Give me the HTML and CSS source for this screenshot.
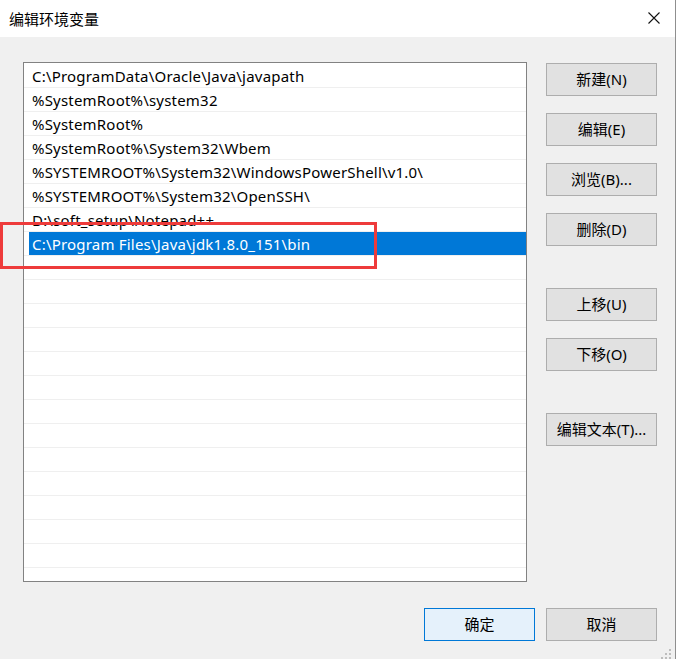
FILE: index.html
```html
<!DOCTYPE html>
<html lang="zh-CN">
<head>
<meta charset="utf-8">
<title>编辑环境变量</title>
<link rel="stylesheet" href="styles.css">
</head>
<body>
<div class="window">
  <div class="titlebar">
    <span class="title">编辑环境变量</span>
    <span class="close" aria-label="关闭">
      <svg width="12" height="12" viewBox="0 0 12 12"><path d="M0.5 0.5 L11.5 11.5 M11.5 0.5 L0.5 11.5" stroke="#111" stroke-width="1.1" fill="none"/></svg>
    </span>
  </div>
  <div class="body">
    <div class="content">
      <div class="listbox">
        <div class="row"><span class="item">C:\ProgramData\Oracle\Java\javapath</span></div>
        <div class="row"><span class="item">%SystemRoot%\system32</span></div>
        <div class="row"><span class="item">%SystemRoot%</span></div>
        <div class="row"><span class="item">%SystemRoot%\System32\Wbem</span></div>
        <div class="row"><span class="item">%SYSTEMROOT%\System32\WindowsPowerShell\v1.0\</span></div>
        <div class="row"><span class="item">%SYSTEMROOT%\System32\OpenSSH\</span></div>
        <div class="row"><span class="item">D:\soft_setup\Notepad++</span></div>
        <div class="row"><span class="item selected">C:\Program Files\Java\jdk1.8.0_151\bin</span></div>
        <div class="row"></div>
        <div class="row"></div>
        <div class="row"></div>
        <div class="row"></div>
        <div class="row"></div>
        <div class="row"></div>
        <div class="row"></div>
        <div class="row"></div>
        <div class="row"></div>
        <div class="row"></div>
        <div class="row"></div>
        <div class="row"></div>
        <div class="row"></div>
        <div class="row"></div>
      </div>
      <div class="side">
        <div class="btn">新建(N)</div>
        <div class="btn gap-s">编辑(E)</div>
        <div class="btn gap-s">浏览(B)...</div>
        <div class="btn gap-s">删除(D)</div>
        <div class="btn gap-l">上移(U)</div>
        <div class="btn gap-s">下移(O)</div>
        <div class="btn gap-l">编辑文本(T)...</div>
      </div>
    </div>
    <div class="footer">
      <div class="btn primary">确定</div>
      <div class="btn">取消</div>
    </div>
    <svg class="grip" width="14" height="12" viewBox="0 0 14 12">
      <rect x="9" y="2" width="2" height="2" fill="#bdbdbd"/>
      <rect x="5" y="6" width="2" height="2" fill="#bdbdbd"/>
      <rect x="9" y="6" width="2" height="2" fill="#bdbdbd"/>
      <rect x="1" y="10" width="2" height="2" fill="#bdbdbd"/>
      <rect x="5" y="10" width="2" height="2" fill="#bdbdbd"/>
      <rect x="9" y="10" width="2" height="2" fill="#bdbdbd"/>
    </svg>
  </div>
  <div class="mark"></div>
</div>
</body>
</html>
```
FILE: styles.css
```css
* { box-sizing: border-box; }
html, body { margin: 0; padding: 0; }
body {
  width: 676px;
  height: 659px;
  overflow: hidden;
  font-family: "Noto Sans", "Noto Sans CJK SC", sans-serif;
  font-size: 15px;
  color: #000;
  background: #f0f0f0;
}
.window {
  position: relative;
  width: 676px;
  height: 659px;
  border-right: 1px solid #8f8f8f;
  display: flex;
  flex-direction: column;
}
.titlebar {
  height: 37px;
  background: #fff;
  display: flex;
  align-items: center;
  justify-content: space-between;
  padding: 0 15px 0 9px;
  flex: none;
}
.title {
  font-family: "Noto Sans CJK SC", sans-serif;
  font-size: 15px;
  line-height: 20px;
}
.close { display: flex; width: 12px; height: 12px; margin-top: -1px; }
.body {
  position: relative;
  flex: 1;
  background: #f0f0f0;
  padding-top: 25px;
  display: flex;
  flex-direction: column;
}
.content {
  display: flex;
  padding-left: 23px;
  gap: 19px;
}
.listbox {
  width: 504px;
  height: 520px;
  border: 1px solid #828282;
  background: #fff;
  padding-top: 1px;
  overflow: hidden;
}
.row {
  height: 24px;
  border-bottom: 1px solid #efefef;
  display: flex;
}
.item {
  flex: 1;
  margin-left: 5px;
  padding-left: 3px;
  padding-top: 1px;
  line-height: 22px;
  letter-spacing: 0.2px;
  white-space: nowrap;
}
.item.selected {
  background: #0078d7;
  color: #fff;
}
.side {
  display: flex;
  flex-direction: column;
  padding-top: 1px;
}
.btn {
  width: 111px;
  height: 33px;
  background: #e1e1e1;
  border: 1px solid #adadad;
  display: flex;
  align-items: center;
  justify-content: center;
  font-size: 15px;
  line-height: 20px;
  padding-bottom: 1px;
}
.gap-s { margin-top: 17px; }
.gap-l { margin-top: 42px; }
.footer {
  display: flex;
  justify-content: flex-end;
  gap: 11px;
  padding-right: 18px;
  margin-top: 26px;
}
.btn.primary {
  background: #e5f1fb;
  border-color: #0078d7;
}
.grip {
  position: absolute;
  right: 1px;
  bottom: 0;
}
.mark {
  position: absolute;
  left: 0;
  top: 222px;
  width: 377px;
  height: 47px;
  border: 3px solid #ee3b3b;
}
```
